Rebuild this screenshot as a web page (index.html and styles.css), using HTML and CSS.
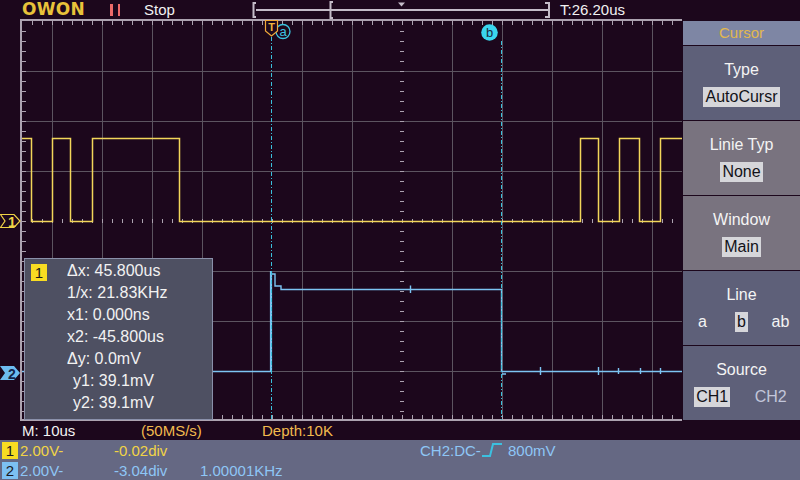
FILE: index.html
```html
<!DOCTYPE html>
<html>
<head>
<meta charset="utf-8">
<title>OWON Cursor</title>
<link rel="stylesheet" href="styles.css">
</head>
<body>
<div class="scope">
  <header class="topbar">
    <span class="logo">OWON</span>
    <span class="pause"><i></i><i></i></span>
    <span class="state">Stop</span>
    <svg class="membar" width="302" height="19" viewBox="0 0 302 19">
      <g fill="none" stroke="#c4bcc8" stroke-width="2">
        <path d="M6 3H3.5V17H6"/>
        <path d="M6 10H298"/>
        <path d="M83 2H80.5V18H83"/>
        <path d="M295 3H299V17H295"/>
      </g>
      <polygon points="148,2.5 155,2.5 151.5,6.5" fill="#c4bcc8"/>
    </svg>
    <span class="tpos">T:26.20us</span>
  </header>

  <div class="main">
    <div class="screen">
      <svg class="graticule" width="682" height="402" viewBox="0 19 682 402">
        <g stroke="#5c5460" stroke-width="1" fill="none">
          <path d="M52.5 21V419M102.5 21V419M152.5 21V419M202.5 21V419M252.5 21V419M302.5 21V419M352.5 21V419M452.5 21V419M502.5 21V419M552.5 21V419M602.5 21V419M652.5 21V419"/>
          <path d="M22 71.5H682M22 121.5H682M22 171.5H682M22 271.5H682M22 321.5H682M22 371.5H682"/>
        </g>
        <g stroke="#aca2b0" fill="none">
          <path d="M21 19V421" stroke-width="2"/>
          <path d="M20 20H682" stroke-width="2"/>
          <path d="M20 420H682" stroke-width="2"/>
          <path d="M32 23H682" stroke-width="4" stroke-dasharray="1 9"/>
          <path d="M32 417H682" stroke-width="4" stroke-dasharray="1 9"/>
          <path d="M24 31V420" stroke-width="4" stroke-dasharray="1 9"/>
          <path d="M402 31V420" stroke-width="4" stroke-dasharray="1 9"/>
          <path d="M32 221H682" stroke-width="4" stroke-dasharray="1 9"/>
        </g>

        <path class="tr1" d="M22 138.5H31.5V221.5H52.5V138.5H70.5V221.5H92.5V138.5H179.5V221.5H580.5V138.5H598.5V221.5H619.5V138.5H639.5V221.5H660.5V138.5H682"/>
        <g class="tr2">
          <path d="M22 371.5H271"/>
          <path d="M271 371.5V271" stroke-width="2.2"/>
          <path d="M272 274H275V286H281V289.5H501.5V371.5H682"/>
          <path d="M410.5 285.5V293M540.5 367V375M598.5 367V375M618.5 368V374M640.5 368V374M660.5 368V374M502 374H506"/>
        </g>

        <g class="cur">
          <path d="M271.5 37V420"/>
          <path d="M501.5 41V420"/>
        </g>
        <circle cx="283" cy="31.5" r="7" fill="none" stroke="#3cc4e0" stroke-width="1.3"/>
        <text x="283" y="36" class="lbl-a">a</text>
        <circle cx="489.5" cy="32.5" r="8.3" fill="#3ad6ee"/>
        <text x="489.5" y="37" class="lbl-b">b</text>

        <polygon points="265.5,20.5 277.5,20.5 277.5,31 271.5,36 265.5,31" fill="#1c071c" stroke="#f0a83a" stroke-width="1.2"/>
        <text x="271.5" y="30.5" class="lbl-t">T</text>

        <polygon points="0.5,214.5 14,214.5 20,221 14,227.5 0.5,227.5 5,221" fill="#1c071c" stroke="#f0d246" stroke-width="1.2"/>
        <text x="12" y="226.5" class="mk1">1</text>
        <polygon points="0,366 14,366 20,373 14,380 0,380 5,373" fill="#6cbcf0"/>
        <text x="12" y="378.5" class="mk2">2</text>
      </svg>

      <div class="readout">
        <span class="badge">1</span>
        <div class="lines">
          <div>Δx: 45.800us</div>
          <div>1/x: 21.83KHz</div>
          <div>x1: 0.000ns</div>
          <div>x2: -45.800us</div>
          <div>Δy: 0.0mV</div>
          <div class="ind">y1: 39.1mV</div>
          <div class="ind">y2: 39.1mV</div>
        </div>
      </div>
    </div>

    <aside class="menu">
      <div class="mhead">Cursor</div>
      <div class="panel blue">
        <div class="ptitle">Type</div>
        <div class="pval"><span class="sel">AutoCursr</span></div>
      </div>
      <div class="panel mauve">
        <div class="ptitle">Linie Typ</div>
        <div class="pval"><span class="sel">None</span></div>
      </div>
      <div class="panel mauve">
        <div class="ptitle">Window</div>
        <div class="pval"><span class="sel">Main</span></div>
      </div>
      <div class="panel blue">
        <div class="ptitle">Line</div>
        <div class="pval opts3"><span>a</span><span><span class="sel">b</span></span><span>ab</span></div>
      </div>
      <div class="panel blue">
        <div class="ptitle">Source</div>
        <div class="pval opts2"><span><span class="sel">CH1</span></span><span class="dim">CH2</span></div>
      </div>
    </aside>
  </div>

  <div class="status">
    <span class="tb">M: 10us</span>
    <span class="rate">(50MS/s)</span>
    <span class="depth">Depth:10K</span>
  </div>

  <footer class="chbar">
    <div class="chrow c1">
      <span class="num">1</span>
      <span class="volt">2.00V-</span>
      <span class="pos">-0.02div</span>
      <span class="trig">CH2:DC-<svg class="edge" width="22" height="16" viewBox="0 0 22 16"><path d="M0 14H8L11 2H20" fill="none" stroke="#3cc0e0" stroke-width="2"/></svg> 800mV</span>
    </div>
    <div class="chrow c2">
      <span class="num">2</span>
      <span class="volt">2.00V-</span>
      <span class="pos2">-3.04div</span>
      <span class="freq">1.00001KHz</span>
    </div>
  </footer>
</div>
</body>
</html>
```

FILE: styles.css
```css
* { box-sizing: border-box; }

body {
  margin: 0;
  background: #1c071c;
  font-family: "Liberation Sans", Arial, sans-serif;
}

.scope {
  width: 800px;
  height: 480px;
  overflow: hidden;
  background: #1c071c;
  display: flex;
  flex-direction: column;
}

/* ---------- top bar ---------- */
.topbar {
  height: 19px;
  display: flex;
  align-items: center;
  flex: none;
  color: #f2f2f2;
  font-size: 15px;
}

.logo {
  margin-left: 22px;
  width: 66px;
  height: 19px;
  font-family: "DejaVu Sans", sans-serif;
  font-weight: bold;
  font-size: 17px;
  letter-spacing: 0.3px;
  line-height: 19px;
  color: #e8c23a;
  white-space: nowrap;
}

.pause {
  margin-left: 22px;
  width: 34px;
  height: 12px;
  display: flex;
  gap: 5px;
}

.pause i {
  display: block;
  width: 2.5px;
  height: 12px;
  background: #ec6a6a;
}

.state {
  width: 106px;
  line-height: 19px;
}

.membar {
  display: block;
  flex: none;
}

.tpos {
  margin-left: 8px;
  line-height: 19px;
}

/* ---------- main ---------- */
.main {
  height: 402px;
  display: flex;
  flex: none;
}

.screen {
  position: relative;
  width: 682px;
  height: 402px;
  flex: none;
}

.graticule {
  display: block;
}

.tr1 {
  fill: none;
  stroke: #f2d65a;
  stroke-width: 1.5;
}

.tr2 {
  fill: none;
  stroke: #7cc4f2;
  stroke-width: 1.4;
}

.cur {
  fill: none;
  stroke: #3ac0dc;
  stroke-width: 1;
  stroke-dasharray: 4 2 1 2;
}

.lbl-a, .lbl-b, .lbl-t, .mk1, .mk2 {
  font-family: "Liberation Sans", Arial, sans-serif;
  text-anchor: middle;
}

.lbl-a { font-size: 13px; fill: #3cc4e0; }
.lbl-b { font-size: 13px; fill: #1c2a40; }
.lbl-t { font-size: 11px; font-weight: bold; fill: #f2b43c; }
.mk1 { font-size: 14px; font-weight: bold; fill: #f0d246; }
.mk2 { font-size: 14px; font-weight: bold; fill: #14244a; }

/* cursor readout overlay */
.readout {
  position: absolute;
  left: 24px;
  top: 239px;
  width: 189px;
  height: 162px;
  background: #4e5062;
  border: 1px solid #8a90aa;
  display: flex;
  padding: 1px 0 0 6px;
  color: #f2f2f2;
  font-size: 16px;
}

.badge {
  margin-top: 4px;
  width: 16px;
  height: 17px;
  background: #f8dc22;
  color: #1a1a1a;
  font-size: 15px;
  line-height: 17px;
  text-align: center;
  flex: none;
}

.lines {
  margin-left: 20px;
  line-height: 22px;
}

.lines .ind {
  padding-left: 6px;
}

/* ---------- right menu ---------- */
.menu {
  width: 118px;
  height: 402px;
  flex: none;
  border-left: 1px solid #1c071c;
  padding-top: 2px;
  display: flex;
  flex-direction: column;
  gap: 1px;
  background: #1c071c;
  font-size: 16px;
  color: #f4f4f4;
}

.mhead {
  height: 24px;
  background: #7e86a4;
  color: #e2b84e;
  font-size: 15px;
  line-height: 24px;
  text-align: center;
}

.panel {
  height: 74px;
  padding-top: 14px;
  display: flex;
  flex-direction: column;
  align-items: center;
}

.panel.blue { background: #5e6079; }
.panel.mauve { background: #79737f; }

.ptitle {
  line-height: 20px;
}

.pval {
  margin-top: 7px;
  line-height: 20px;
}

.sel {
  display: inline-block;
  background: #d6d6da;
  color: #121218;
  padding: 0 2px;
}

.opts3 {
  width: 100%;
  display: grid;
  grid-template-columns: 1fr 1fr 1fr;
  text-align: center;
}

.opts2 {
  width: 100%;
  display: grid;
  grid-template-columns: 1fr 1fr;
  text-align: center;
}

.dim {
  color: #c2c6da;
}

/* ---------- status line ---------- */
.status {
  height: 19px;
  flex: none;
  display: flex;
  align-items: center;
  font-size: 15px;
  line-height: 19px;
}

.tb {
  margin-left: 22px;
  width: 119px;
  color: #f2f2f2;
}

.rate {
  width: 121px;
  color: #f2ba4e;
}

.depth {
  color: #f2ba4e;
}

/* ---------- channel bar ---------- */
.chbar {
  height: 40px;
  flex: none;
  background: #656883;
  font-size: 15px;
}

.chrow {
  height: 20px;
  display: flex;
  align-items: center;
}

.num {
  margin-left: 2px;
  width: 16px;
  height: 17px;
  text-align: center;
  line-height: 17px;
  color: #1a1a22;
  flex: none;
}

.c1 .num { background: #f8dc22; }
.c2 .num { background: #7cc0f2; }

.c1 { color: #f2d446; }
.c2 { color: #8ec6f6; }

.volt {
  margin-left: 2px;
  width: 94px;
}

.pos {
  width: 306px;
}

.pos2 {
  width: 86px;
}

.trig {
  color: #8ec6f6;
  display: flex;
  align-items: center;
  white-space: pre;
}

.edge {
  display: block;
  margin-left: 1px;
}
```
